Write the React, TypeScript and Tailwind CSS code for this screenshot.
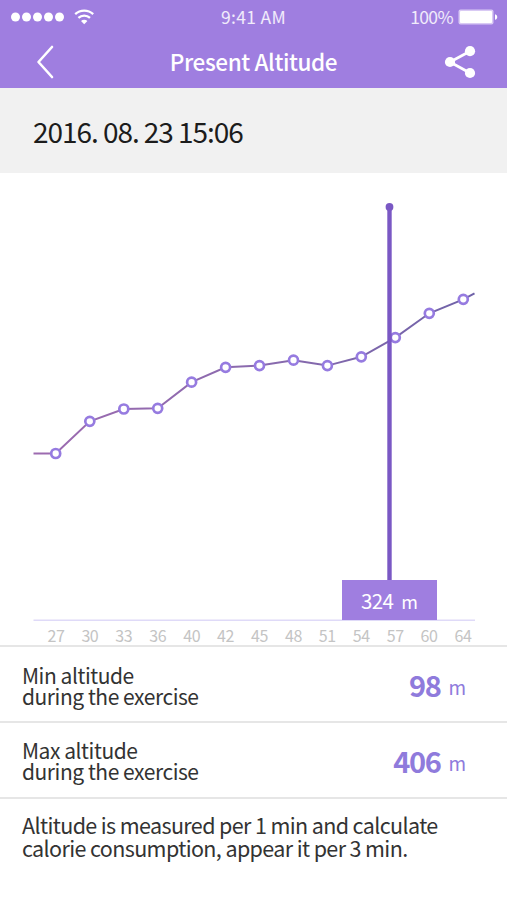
const points = [
  { label: '27', x: 55.7, y: 453.5 },
  { label: '30', x: 89.8, y: 421.3 },
  { label: '33', x: 123.8, y: 409 },
  { label: '36', x: 157.7, y: 408.3 },
  { label: '40', x: 191.6, y: 382.2 },
  { label: '42', x: 225.6, y: 367.3 },
  { label: '45', x: 259.5, y: 365.6 },
  { label: '48', x: 293.5, y: 360.2 },
  { label: '51', x: 327.4, y: 365.6 },
  { label: '54', x: 361.3, y: 356.8 },
  { label: '57', x: 395.3, y: 337.6 },
  { label: '60', x: 429.3, y: 313.3 },
  { label: '64', x: 463.3, y: 299.3 },
];

const records = [
  { name: 'Min altitude', value: '98', padding: 'pt-[4px]' },
  { name: 'Max altitude', value: '406', padding: 'pt-[2px]' },
];

const CHART_TOP = 173;

function StatusBar() {
  return (
    <div className="grid h-[34px] grid-cols-3 items-center text-[17.5px] leading-none text-white/85">
      <div className="flex items-center pl-[11px]">
        <svg width="86" height="16" viewBox="0 0 86 16" fill="none">
          {[4.5, 15.5, 26.5, 37.5, 48.5].map((cx) => (
            <circle key={cx} cx={cx} cy="8" r="4.5" fill="#fff" />
          ))}
          <path d="M64.2 5.2a13.2 13.2 0 0 1 18 0" stroke="#fff" strokeWidth="2.3" />
          <path d="M67.4 8.9a8.4 8.4 0 0 1 11.6 0" stroke="#fff" strokeWidth="2.3" />
          <path d="M70 12a4.6 4.6 0 0 1 6.4 0l-3.2 3.2z" fill="#fff" />
        </svg>
      </div>
      <div className="text-center tracking-[0.3px]">9:41 AM</div>
      <div className="flex items-center justify-end gap-[5px] pr-[9px]">
        <span className="tracking-[-0.6px]">100%</span>
        <svg width="40" height="16" viewBox="0 0 40 16">
          <rect x="0.5" y="0.5" width="35" height="15" rx="2" fill="#d9caf4" />
          <rect x="2" y="2" width="32" height="12" rx="1" fill="#fff" />
          <path d="M37 5.2c3 .6 3 5 0 5.6z" fill="#fff" />
        </svg>
      </div>
    </div>
  );
}

function Header() {
  return (
    <header className="h-[88px] bg-[#9f7ee0]">
      <StatusBar />
      <div className="flex h-[54px] items-center justify-between pr-[31px] pl-[36px]">
        <svg width="18" height="34" viewBox="0 0 18 34" fill="none" className="mt-[2px]">
          <path d="M16 2 2.5 17 16 32" stroke="#fff" strokeWidth="2.6" strokeLinecap="round" strokeLinejoin="round" />
        </svg>
        <h1 className="ml-[9px] text-[22.5px] leading-none font-medium tracking-[-0.4px] text-white">Present Altitude</h1>
        <svg width="32" height="34" viewBox="0 0 32 34" className="mt-[2px]">
          <path d="M26 6.2 6 17l20 11" fill="none" stroke="#fff" strokeWidth="2.8" />
          <circle cx="26" cy="6.2" r="5.1" fill="#fff" />
          <circle cx="6" cy="17" r="5.1" fill="#fff" />
          <circle cx="26" cy="28" r="5.1" fill="#fff" />
        </svg>
      </div>
    </header>
  );
}

function AltitudeChart() {
  const line = [[33.5, 453.5], ...points.map((p) => [p.x, p.y]), [474.5, 293.3]].map((p) => p.join(',')).join(' ');

  return (
    <section className="relative h-[472px]">
      <svg width="507" height="448" viewBox={`0 ${CHART_TOP} 507 448`} className="block" fill="none">
        <defs>
          <linearGradient id="altitude" gradientUnits="userSpaceOnUse" x1="34" y1="0" x2="475" y2="0">
            <stop offset="0" stopColor="#9d6bb0" />
            <stop offset="0.5" stopColor="#8a6aae" />
            <stop offset="1" stopColor="#6f62a8" />
          </linearGradient>
        </defs>
        <path d="M33.5 620.3H475" stroke="#dfdaf8" strokeWidth="1.6" />
        <polyline points={line} stroke="url(#altitude)" strokeWidth="2" />
        {points.map((p) => (
          <circle key={p.label} cx={p.x} cy={p.y} r="4.5" fill="#fff" stroke="#967be0" strokeWidth="2.7" />
        ))}
        <path d="M389.5 207V581" stroke="#7a58c4" strokeWidth="4.4" />
        <circle cx="389.5" cy="207" r="3.9" fill="#7a58c4" />
      </svg>
      <div className="absolute top-[407px] left-[342px] flex h-10 w-[95px] items-baseline justify-center gap-[8px] bg-[#9f7ee0] pt-[10px] leading-none text-white">
        <span className="text-[20.5px] tracking-[-0.6px]">324</span>
        <span className="text-[18px]">m</span>
      </div>
      <div className="ml-[39px] grid w-[441px] grid-cols-13 pt-[6px] text-center text-[16px] leading-[16px] tracking-[-0.4px] text-[#c4c4c4]">
        {points.map((p) => (
          <span key={p.label}>{p.label}</span>
        ))}
      </div>
    </section>
  );
}

export default function App() {
  return (
    <div className="h-[900px] w-[507px] overflow-hidden bg-white font-['Noto_Sans_CJK_KR',sans-serif] text-[#333]">
      <Header />
      <div className="flex h-[85px] items-center bg-[#f1f1f1] pt-px pl-[33px] text-[28px] leading-none tracking-[-1.05px] text-[#1c1c1c]">
        2016. 08. 23 15:06
      </div>
      <AltitudeChart />

      {records.map((r) => (
        <div key={r.name} className="flex h-[76px] items-center justify-between border-t-2 border-[#e6e6e6] pr-[41px] pl-[22px]">
          <p className={`${r.padding} text-[21px] leading-[21px] tracking-[-0.45px]`}>
            {r.name}
            <br />
            during the exercise
          </p>
          <p className="flex items-baseline gap-[8px] leading-none text-[#8f7bdc]">
            <span className="text-[29px] font-bold tracking-[-1.4px]">{r.value}</span>
            <span className="relative -top-[2px] text-[19px]">m</span>
          </p>
        </div>
      ))}

      <p className="border-t-2 border-[#e6e6e6] pt-[14px] pl-[22px] text-[21.5px] leading-[23px] tracking-[-0.62px]">
        Altitude is measured per 1 min and calculate
        <br />
        calorie consumption, appear it per 3 min.
      </p>
    </div>
  );
}
